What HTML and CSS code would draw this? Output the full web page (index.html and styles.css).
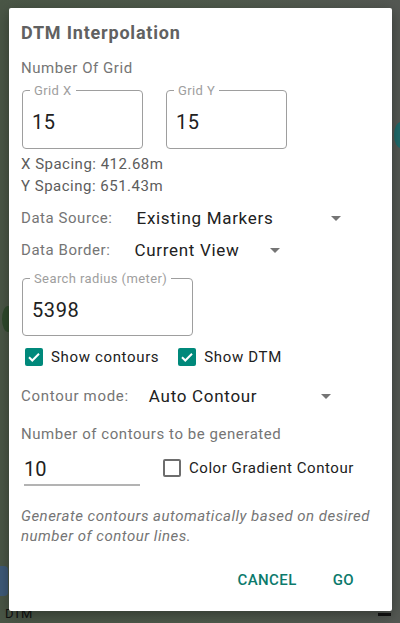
FILE: index.html
```html
<!DOCTYPE html>
<html lang="en">
<head>
    <meta charset="UTF-8">
    <meta name="viewport" content="width=device-width, initial-scale=1.0">
    <title>DTM Interpolation</title>
    <link rel="stylesheet" href="styles.css">
</head>
<body>
    <div class="screen">
        <!-- map behind the dialog -->
        <div class="map">
            <span class="map-blob map-blob-teal"></span>
            <span class="map-blob map-blob-green"></span>
            <span class="map-blob map-blob-blue"></span>
            <span class="map-label">DTM</span>
            <span class="map-bar"></span>
        </div>

        <div class="dialog">
            <h1 class="dialog-title">DTM Interpolation</h1>

            <p class="label">Number Of Grid</p>
            <div class="grid-row">
                <div class="outlined">
                    <span class="outlined-label">Grid X</span>
                    <span class="outlined-value">15</span>
                </div>
                <div class="outlined">
                    <span class="outlined-label">Grid Y</span>
                    <span class="outlined-value">15</span>
                </div>
            </div>

            <div class="spacing">
                <p>X Spacing: 412.68m</p>
                <p>Y Spacing: 651.43m</p>
            </div>

            <div class="field-row first">
                <span class="field-label">Data Source:</span>
                <div class="spinner spinner-source">
                    <span>Existing Markers</span>
                    <span class="arrow"></span>
                </div>
            </div>
            <div class="field-row">
                <span class="field-label">Data Border:</span>
                <div class="spinner spinner-border">
                    <span>Current View</span>
                    <span class="arrow"></span>
                </div>
            </div>

            <div class="outlined outlined-radius">
                <span class="outlined-label">Search radius (meter)</span>
                <span class="outlined-value">5398</span>
            </div>

            <div class="check-row">
                <label class="check">
                    <span class="box checked">
                        <svg viewBox="0 0 18 18" width="18" height="18"><path d="M4 9.2l3.3 3.3L14 5.8" fill="none" stroke="#fff" stroke-width="2"/></svg>
                    </span>
                    Show contours
                </label>
                <label class="check">
                    <span class="box checked">
                        <svg viewBox="0 0 18 18" width="18" height="18"><path d="M4 9.2l3.3 3.3L14 5.8" fill="none" stroke="#fff" stroke-width="2"/></svg>
                    </span>
                    Show DTM
                </label>
            </div>

            <div class="field-row mode">
                <span class="field-label narrow">Contour mode:</span>
                <div class="spinner spinner-mode">
                    <span>Auto Contour</span>
                    <span class="arrow"></span>
                </div>
            </div>

            <p class="label count-label">Number of contours to be generated</p>
            <div class="count-row">
                <div class="edit">10</div>
                <label class="check gradient">
                    <span class="box"></span>
                    Color Gradient Contour
                </label>
            </div>

            <p class="hint">Generate contours automatically based on desired number of contour lines.</p>

            <div class="actions">
                <button class="text-btn">CANCEL</button>
                <button class="text-btn">GO</button>
            </div>
        </div>
    </div>
</body>
</html>
```

FILE: styles.css
```css
:root {
    --accent: #00897b;
    --accent-text: #0b7a6c;
    --label: #757575;
    --text: #212121;
    --outline: #9e9e9e;
}

* {
    margin: 0;
    padding: 0;
    box-sizing: border-box;
    font-family: Roboto, 'Noto Sans', sans-serif;
}

body {
    width: 400px;
    height: 623px;
    overflow: hidden;
}

.screen {
    position: relative;
    width: 400px;
    height: 623px;
}

.map {
    position: absolute;
    inset: 0;
    background: linear-gradient(90deg, #4a5646 0%, #4f5a4c 55%, #545853 100%);
}

.map-blob {
    position: absolute;
    border-radius: 50%;
}

.map-blob-teal {
    right: -8px;
    top: 122px;
    width: 14px;
    height: 26px;
    background: #1f6a6a;
}

.map-blob-green {
    left: 2px;
    top: 306px;
    width: 12px;
    height: 26px;
    background: #2f4a2c;
}

.map-blob-blue {
    left: -4px;
    top: 566px;
    width: 12px;
    height: 30px;
    border-radius: 4px;
    background: #3e5a78;
}

.map-label {
    position: absolute;
    left: 5px;
    top: 606px;
    font-size: 13px;
    color: #111;
}

.map-bar {
    position: absolute;
    left: 378px;
    top: 613px;
    width: 13px;
    height: 3px;
    background: #111;
}

.dialog {
    position: absolute;
    left: 9px;
    top: 8px;
    width: 383px;
    height: 603px;
    padding: 13px 12px 0;
    background: #fff;
    border-radius: 2px;
    box-shadow: 0 4px 14px rgba(0, 0, 0, 0.35);
}

.dialog-title {
    font-size: 18px;
    line-height: 24px;
    font-weight: 700;
    letter-spacing: 0.8px;
    color: #616161;
}

.label {
    margin-top: 13px;
    font-size: 15px;
    line-height: 20px;
    letter-spacing: 0.55px;
    color: var(--label);
}

.grid-row {
    display: flex;
    gap: 23px;
    margin-top: 12px;
    margin-left: 1px;
}

.outlined {
    position: relative;
    width: 121px;
    height: 59px;
    padding: 19px 9px 0;
    border: 1px solid var(--outline);
    border-radius: 4px;
}

.outlined-label {
    position: absolute;
    left: 7px;
    top: -7px;
    padding: 0 4px;
    background: #fff;
    font-size: 13px;
    line-height: 14px;
    letter-spacing: 0.4px;
    color: #9e9e9e;
}

.outlined-value {
    display: block;
    font-size: 20px;
    line-height: 24px;
    letter-spacing: 0.6px;
    color: var(--text);
}

.spacing {
    margin-top: 4px;
    font-size: 15px;
    line-height: 22px;
    letter-spacing: 0.5px;
    color: #5c5c5c;
}

.field-row {
    display: flex;
    align-items: center;
    height: 32px;
}

.field-row.first {
    margin-top: 5px;
}

.field-row.mode {
    margin-top: 8px;
}

.field-label {
    margin-right: 24px;
    font-size: 15px;
    letter-spacing: 0.55px;
    color: var(--label);
}

.field-label.narrow {
    margin-right: 20px;
    letter-spacing: 0.7px;
}

.spinner {
    display: flex;
    align-items: center;
    justify-content: space-between;
    padding-right: 8px;
    font-size: 17px;
    letter-spacing: 0.7px;
    color: var(--text);
}

.spinner-source {
    width: 212px;
}

.spinner-border {
    width: 154px;
}

.spinner-mode {
    width: 190px;
}

.arrow {
    width: 0;
    height: 0;
    border-left: 5px solid transparent;
    border-right: 5px solid transparent;
    border-top: 5px solid #757575;
}

.outlined-radius {
    width: 171px;
    height: 58px;
    margin-top: 12px;
    margin-left: 1px;
}

.check-row {
    display: flex;
    gap: 19px;
    height: 30px;
    margin-top: 6px;
    margin-left: 4px;
    align-items: center;
}

.check {
    display: flex;
    align-items: center;
    gap: 8px;
    font-size: 15px;
    line-height: 20px;
    letter-spacing: 0.65px;
    color: var(--text);
}

.box {
    width: 18px;
    height: 18px;
    border: 2px solid #6d6d6d;
    border-radius: 2px;
}

.box.checked {
    border: none;
    background: var(--accent);
}

.box svg {
    display: block;
}

.count-label {
    margin-top: 12px;
}

.count-row {
    display: flex;
    align-items: flex-start;
    margin-top: 12px;
}

.edit {
    width: 116px;
    margin-left: 3px;
    padding-bottom: 2px;
    font-size: 20px;
    line-height: 26px;
    color: var(--text);
    border-bottom: 2px solid #b3b3b3;
}

.gradient {
    margin-top: 2px;
    margin-left: 23px;
    letter-spacing: 0.55px;
}

.hint {
    margin-top: 20px;
    font-size: 15px;
    line-height: 20px;
    font-style: italic;
    letter-spacing: 0.5px;
    color: var(--label);
}

.actions {
    display: flex;
    justify-content: flex-end;
    gap: 4px;
    margin-top: 16px;
    margin-right: 10px;
}

.text-btn {
    height: 36px;
    padding: 0 16px;
    border: none;
    background: none;
    font-size: 15px;
    font-weight: 500;
    letter-spacing: 0.4px;
    color: var(--accent-text);
    cursor: pointer;
}
```
